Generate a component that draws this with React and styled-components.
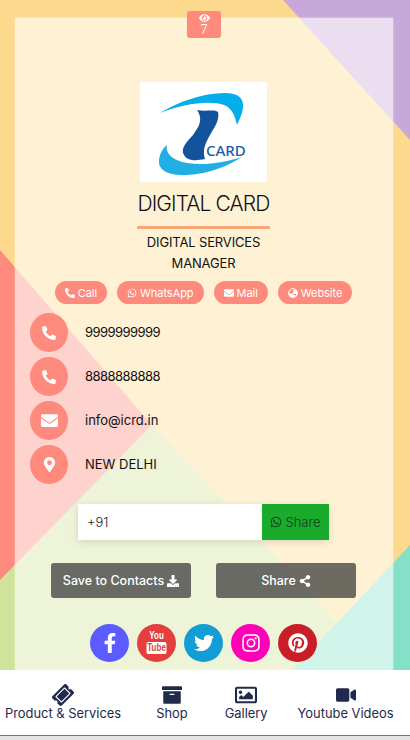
import React from "react";
import styled, { createGlobalStyle } from "styled-components";
import {
    FaPhoneAlt,
    FaWhatsapp,
    FaEnvelope,
    FaGlobeAsia,
    FaMapMarkerAlt,
    FaDownload,
    FaShareAlt,
    FaFacebookF,
    FaTwitter,
    FaInstagram,
    FaPinterest,
    FaTicketAlt,
    FaArchive,
    FaRegImage,
    FaVideo,
    FaEye,
} from "react-icons/fa";

const GlobalStyle = createGlobalStyle`
    html, body {
        margin: 0;
        padding: 0;
        background: #e4e4e4;
    }
    * {
        box-sizing: border-box;
    }
`;

const Backdrop = () => (
    <BackdropSvg viewBox="0 0 410 740" preserveAspectRatio="none">
        <rect width="410" height="740" fill="#fdd98e" />
        <polygon points="283,0 410,0 410,140" fill="#c8a8d8" />
        <polygon points="0,580 152,425 337,623 337,740 0,740" fill="#cfe39a" />
        <polygon points="410,545 280,684 280,740 410,740" fill="#85e0c8" />
        <polygon points="0,250 152,425 0,580" fill="#fd8a7d" />
    </BackdropSvg>
);

const Logo = () => (
    <svg width="127" height="100" viewBox="0 0 127 100">
        <rect width="127" height="100" fill="#fff" />
        <path
            d="M20 31 C38 20 62 11 85 11 C98 11 104 16 103 26 C102 33 99 38 97 43 C95 34 92 26 84 23 C70 18 42 22 20 31 Z"
            fill="#05aeea"
        />
        <path
            d="M57 28 C66 30 74 27 78 30 C80 38 74 46 70 53 C66 60 62 68 65 77 C56 79 47 79 44 73 C40 66 47 60 53 53 C58 46 64 38 57 28 Z"
            fill="#13529c"
        />
        <path
            d="M27 63 C25 72 34 79 47 81 C66 84 85 80 102 75 C88 84 68 92 48 93 C32 94 19 90 19 80 C19 73 22 67 27 63 Z"
            fill="#22aee2"
        />
        <LogoText x="66" y="74">CARD</LogoText>
    </svg>
);

const contacts = [
    { icon: <FaPhoneAlt />, size: 14, text: "9999999999", numeric: true },
    { icon: <FaPhoneAlt />, size: 14, text: "8888888888", numeric: true },
    { icon: <FaEnvelope />, size: 17, text: "info@icrd.in" },
    { icon: <FaMapMarkerAlt />, size: 15, text: "NEW DELHI" },
];

const App = () => {
    return (
        <Page>
            <GlobalStyle />
            <Backdrop />
            <ViewBadge>
                <FaEye />
                <span>7</span>
            </ViewBadge>
            <Scroller>
                <Panel>
                    <Logo />
                    <Title>DIGITAL CARD</Title>
                    <TitleRule />
                    <Role>
                        DIGITAL SERVICES
                        <br />
                        MANAGER
                    </Role>
                    <PillRow>
                        <Pill>
                            <FaPhoneAlt /> Call
                        </Pill>
                        <Pill>
                            <FaWhatsapp /> WhatsApp
                        </Pill>
                        <Pill>
                            <FaEnvelope /> Mail
                        </Pill>
                        <Pill>
                            <FaGlobeAsia /> Website
                        </Pill>
                    </PillRow>
                    <ContactList>
                        {contacts.map((contact) => (
                            <ContactRow key={contact.text}>
                                <ContactIcon $size={contact.size}>
                                    {contact.icon}
                                </ContactIcon>
                                <ContactText $numeric={contact.numeric}>
                                    {contact.text}
                                </ContactText>
                            </ContactRow>
                        ))}
                    </ContactList>
                    <ShareForm>
                        <PhoneInput defaultValue="+91" />
                        <ShareSend>
                            <FaWhatsapp /> Share
                        </ShareSend>
                    </ShareForm>
                    <ActionRow>
                        <ActionButton>
                            Save to Contacts <FaDownload />
                        </ActionButton>
                        <ActionButton>
                            Share <FaShareAlt />
                        </ActionButton>
                    </ActionRow>
                    <SocialRow>
                        <SocialLink $color="#5b5bff">
                            <FaFacebookF />
                        </SocialLink>
                        <SocialLink $color="#e53e3e">
                            <YouTubeMark>
                                <span>You</span>
                                <b>Tube</b>
                            </YouTubeMark>
                        </SocialLink>
                        <SocialLink $color="#149cd4">
                            <FaTwitter />
                        </SocialLink>
                        <SocialLink $color="#ff00b8">
                            <FaInstagram />
                        </SocialLink>
                        <SocialLink $color="#c91d27">
                            <FaPinterest />
                        </SocialLink>
                    </SocialRow>
                </Panel>
            </Scroller>
            <BottomNav>
                <NavItem>
                    <TicketIcon />
                    Product &amp; Services
                </NavItem>
                <NavItem $gap={35}>
                    <FaArchive />
                    Shop
                </NavItem>
                <NavItem $gap={37}>
                    <GalleryIcon />
                    Gallery
                </NavItem>
                <NavItem $gap={30}>
                    <FaVideo />
                    Youtube Videos
                </NavItem>
            </BottomNav>
            <BrowserEdge />
        </Page>
    );
};

const Page = styled.div`
    position: relative;
    width: 410px;
    height: 740px;
    overflow: hidden;
    display: flex;
    flex-direction: column;
    font-family: Inter, "Noto Sans", sans-serif;
    color: #111;
`;

const BackdropSvg = styled.svg`
    position: absolute;
    top: 0;
    left: 0;
    width: 410px;
    height: 740px;
`;

const LogoText = styled.text`
    font-family: "Noto Sans", sans-serif;
    font-size: 15px;
    font-weight: 500;
    fill: #1d5ba6;
`;

const ViewBadge = styled.div`
    position: absolute;
    top: 11px;
    left: 187px;
    width: 34px;
    height: 27px;
    background: #fd8a7d;
    border-radius: 3px;
    color: #fff;
    display: flex;
    flex-direction: column;
    align-items: center;
    justify-content: center;
    font-family: "Liberation Serif", serif;
    font-size: 14px;
    line-height: 13px;
    z-index: 2;

    svg {
        width: 11px;
        height: 10px;
    }
`;

const Scroller = styled.div`
    position: relative;
    flex: 1;
    min-height: 0;
    padding: 18px 17px 0 15px;
`;

const Panel = styled.div`
    height: 100%;
    background: rgba(255, 255, 255, 0.62);
    box-shadow: 0 0 2px rgba(255, 255, 255, 0.6);
    padding: 64px 1px 0 0;
    display: flex;
    flex-direction: column;
    align-items: center;
`;

const Title = styled.h1`
    margin: 10px 0 0;
    font-size: 21px;
    line-height: 24px;
    font-weight: 300;
    letter-spacing: -0.9px;
    color: #111;
`;

const TitleRule = styled.div`
    width: 133px;
    height: 3px;
    margin-top: 10px;
    background: #f9a777;
`;

const Role = styled.div`
    margin-top: 3px;
    font-size: 13px;
    line-height: 21px;
    font-weight: 400;
    letter-spacing: -0.15px;
    text-align: center;
`;

const PillRow = styled.div`
    margin-top: 7px;
    display: flex;
    gap: 10px;
`;

const Pill = styled.a`
    height: 23px;
    padding: 0 10px;
    border-radius: 12px;
    background: #fd8a7d;
    color: #fff;
    font-size: 11px;
    letter-spacing: -0.05px;
    display: flex;
    align-items: center;
    gap: 3px;
    white-space: nowrap;

    svg {
        width: 10px;
        height: 10px;
    }
`;

const ContactList = styled.div`
    align-self: stretch;
    margin-top: 9px;
    padding-left: 15px;
    display: flex;
    flex-direction: column;
    gap: 5px;
`;

const ContactRow = styled.div`
    display: flex;
    align-items: center;
    gap: 17px;
`;

const ContactIcon = styled.div`
    width: 38px;
    height: 39px;
    border-radius: 50%;
    background: #fd8a7d;
    color: #fff;
    display: flex;
    align-items: center;
    justify-content: center;

    svg {
        width: ${(props) => props.$size}px;
        height: ${(props) => props.$size}px;
    }
`;

const ContactText = styled.div`
    font-size: 13px;
    padding-bottom: 2px;
    letter-spacing: ${(props) => (props.$numeric ? "-0.55px" : "0")};
    color: #111;
`;

const ShareForm = styled.div`
    margin-top: 20px;
    width: 251px;
    height: 36px;
    display: flex;
    box-shadow: 0 2px 8px rgba(0, 0, 0, 0.12);
`;

const PhoneInput = styled.input`
    width: 184px;
    border: 0;
    outline: 0;
    padding: 0 9px;
    background: #fff;
    font-family: Inter, sans-serif;
    font-size: 13px;
    font-weight: 300;
    color: #222;
`;

const ShareSend = styled.div`
    flex: 1;
    background: #1aab2c;
    color: #14401c;
    font-size: 13px;
    font-weight: 300;
    display: flex;
    align-items: center;
    justify-content: center;
    gap: 3px;

    svg {
        width: 12px;
        height: 12px;
    }
`;

const ActionRow = styled.div`
    margin-top: 23px;
    display: flex;
    gap: 25px;
`;

const ActionButton = styled.div`
    width: 140px;
    height: 35px;
    border-radius: 3px;
    background: rgba(60, 60, 60, 0.75);
    color: #fff;
    font-size: 12.5px;
    font-weight: 500;
    display: flex;
    align-items: center;
    justify-content: center;
    gap: 3px;

    svg {
        width: 12px;
        height: 12px;
    }
`;

const SocialRow = styled.div`
    margin-top: 26px;
    display: flex;
    gap: 8px;
`;

const SocialLink = styled.a`
    width: 39px;
    height: 38px;
    border-radius: 50%;
    background: ${(props) => props.$color};
    color: #fff;
    display: flex;
    align-items: center;
    justify-content: center;

    svg {
        width: 20px;
        height: 20px;
    }
`;

const YouTubeMark = styled.div`
    display: flex;
    flex-direction: column;
    align-items: center;
    padding-bottom: 3px;
    font-family: "Liberation Sans", sans-serif;
    font-size: 10px;
    line-height: 12px;
    font-weight: 700;
    transform: scaleX(0.8);

    b {
        font-weight: 700;
        background: #fff;
        color: #e53e3e;
        border-radius: 2px;
        padding: 0 1px;
    }
`;

const BottomNav = styled.nav`
    position: relative;
    height: 65px;
    flex-shrink: 0;
    background: #fff;
    padding: 15px 0 0 5px;
    display: flex;
    align-items: flex-start;
`;

const NavItem = styled.a`
    margin-left: ${(props) => props.$gap || 0}px;
    display: flex;
    flex-direction: column;
    align-items: center;
    font-size: 12.9px;
    line-height: 15px;
    color: #1f2a4d;
    white-space: nowrap;

    svg {
        width: 20px;
        height: 20px;
        margin-bottom: 1px;
    }
`;

const TicketIcon = styled(FaTicketAlt)`
    transform: rotate(-45deg);
`;

const GalleryIcon = styled(FaRegImage)`
    && {
        width: 22px;
        height: 22px;
        margin: -1px 0 0;
    }
`;

const BrowserEdge = styled.div`
    position: relative;
    height: 5px;
    flex-shrink: 0;
    background: #e4e4e4;
    border-top: 1px solid #777;
`;

export default App;
